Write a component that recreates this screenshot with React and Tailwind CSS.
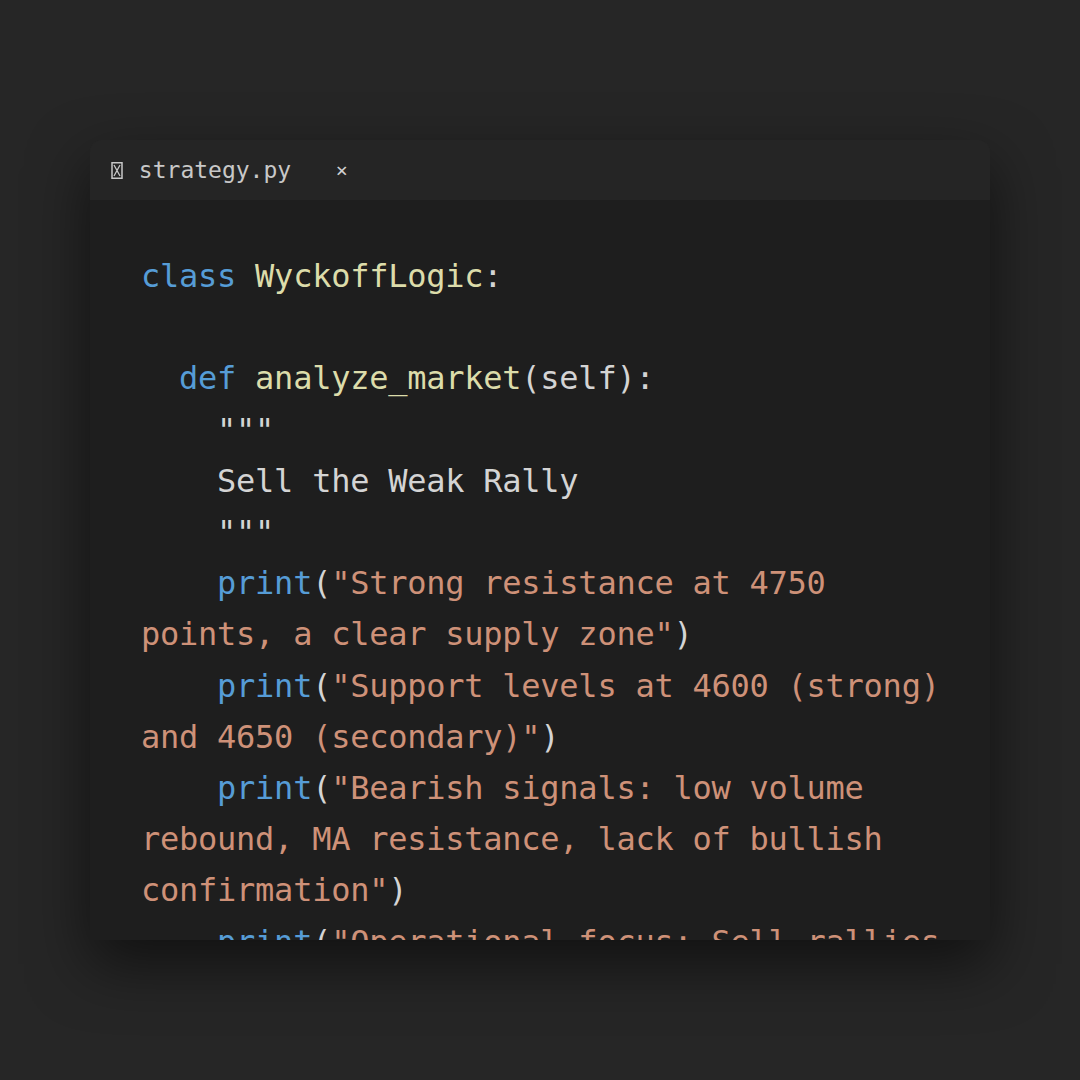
import React from "react";

const K = ({ children }) => <span className="text-[#569cd6]">{children}</span>;
const F = ({ children }) => <span className="text-[#dcdcaa]">{children}</span>;
const S = ({ children }) => <span className="text-[#ce9178]">{children}</span>;

const lines = [
  <><K>class</K> <F>WyckoffLogic</F>:</>,
  <>{" "}</>,
  <>{"  "}<K>def</K> <F>analyze_market</F>(self):</>,
  <>{"    "}"""</>,
  <>{"    "}Sell the Weak Rally</>,
  <>{"    "}"""</>,
  <>{"    "}<K>print</K>(<S>"Strong resistance at 4750</S></>,
  <><S>points, a clear supply zone"</S>)</>,
  <>{"    "}<K>print</K>(<S>"Support levels at 4600 (strong)</S></>,
  <><S>and 4650 (secondary)"</S>)</>,
  <>{"    "}<K>print</K>(<S>"Bearish signals: low volume</S></>,
  <><S>rebound, MA resistance, lack of bullish</S></>,
  <><S>confirmation"</S>)</>,
  <>{"    "}<K>print</K>(<S>"Operational focus: Sell rallies</S></>,
];

export default function App() {
  return (
    <div
      className="w-[1080px] h-[1080px] bg-[#262626] pt-[140px] pl-[90px]"
      style={{ fontFamily: '"DejaVu Sans Mono", "Liberation Mono", monospace' }}
    >
      <div className="w-[900px] h-[800px] flex flex-col rounded-t-xl overflow-hidden shadow-[0_24px_60px_rgba(0,0,0,0.55)]">
        <div className="h-[60px] shrink-0 bg-[#252525] flex items-center pl-[21px] text-[23px] text-[#c8c8c8] whitespace-pre">
          <svg width="14" height="17" viewBox="0 0 14 17" className="shrink-0">
            <rect x="1" y="0.75" width="10" height="15.5" fill="none" stroke="#c8c8c8" strokeWidth="1.5" />
            <path d="M3 3 L9 14 M9 3 L3 14" stroke="#c8c8c8" strokeWidth="1.3" />
          </svg>
          <span>{" strategy.py   "}</span>
          <span className="ml-[3px] text-[20px] text-[#d0d0d0]">×</span>
        </div>
        <div className="flex-1 bg-[#1e1e1e] overflow-hidden pt-[51px] pl-[51px] text-[32px] leading-[51.2px] tracking-[-0.25px] text-[#d4d4d4]">
          {lines.map((l, i) => (
            <div key={i} className="whitespace-pre">
              {l}
            </div>
          ))}
        </div>
      </div>
    </div>
  );
}
